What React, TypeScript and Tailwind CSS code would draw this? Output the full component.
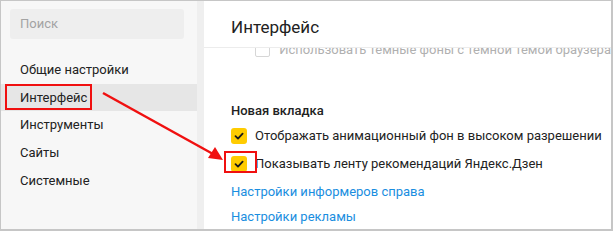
import React from "react";

const Check = () => (
  <svg width="16" height="16" viewBox="0 0 16 16" className="block">
    <path d="M4.5 8.2 L7 10.6 L11.6 5.6" fill="none" stroke="#1a1a1a" strokeWidth="1.8" strokeLinecap="round" strokeLinejoin="round" />
  </svg>
);

export default function App() {
  const font = { fontFamily: 'Roboto, "Noto Sans", sans-serif' };
  return (
    <div className="relative w-[613px] h-[231px] overflow-hidden bg-white whitespace-nowrap" style={font}>
      <div className="flex h-full border border-[#c6c6c6] border-r-2 border-b-2">
        {/* Sidebar */}
        <div className="w-[196px] shrink-0 h-full bg-[#f7f7f7] flex flex-col">
          <div className="ml-[9px] mr-[13px] mt-[8px] h-[30px] rounded-[3px] bg-[#eeeeee] flex items-center pl-[10px] text-[13px] text-[#a3a3a3]">
            Поиск
          </div>
          <div className="mt-[17px] flex flex-col text-[13px] text-[#222]">
            <div className="h-[28px] flex items-center pl-[19px]">Общие настройки</div>
            <div className="h-[27px] flex items-center pl-[19px] bg-[#e6e6e6]">Интерфейс</div>
            <div className="h-[28px] flex items-center pl-[19px]">Инструменты</div>
            <div className="h-[28px] flex items-center pl-[19px]">Сайты</div>
            <div className="h-[28px] flex items-center pl-[19px]">Системные</div>
          </div>
        </div>
        <div className="w-[7px] shrink-0 h-full bg-[#efefef]" />
        {/* Content */}
        <div className="flex-1 min-w-0 h-full flex flex-col bg-white">
          <div className="h-[47px] shrink-0 border-b border-[#ececec] flex items-center pt-[7px] pl-[27px] text-[17px] text-[#222]">
            Интерфейс
          </div>
          <div className="flex-1 overflow-hidden">
            <div className="-mt-[6px] pl-[27px]">
              <div className="h-[16px] flex items-center gap-[9px] pl-[24px]">
                <div className="w-[16px] h-[14px] rounded-[2px] border border-[#d6d6d6]" />
                <span className="text-[13px] text-[#b0b0b0]">Использовать темные фоны с темной темой браузера</span>
              </div>
              <div className="mt-[43px] text-[13px] font-medium text-[#222]">Новая вкладка</div>
              <div className="mt-[5px] flex items-center gap-[8px] h-[20px]">
                <div className="w-[16px] h-[16px] rounded-[3px] bg-[#ffcc00]"><Check /></div>
                <span className="text-[13px] text-[#222]">Отображать анимационный фон в высоком разрешении</span>
              </div>
              <div className="mt-[8px] flex items-center gap-[8px] h-[20px]">
                <div className="w-[16px] h-[16px] rounded-[3px] bg-[#ffcc00]"><Check /></div>
                <span className="text-[13px] text-[#222]">Показывать ленту рекомендаций Яндекс.Дзен</span>
              </div>
              <div className="mt-[10px] text-[13px] leading-[16px] text-[#1a8ee0]">Настройки информеров справа</div>
              <div className="mt-[9px] text-[13px] leading-[16px] text-[#1a8ee0]">Настройки рекламы</div>
            </div>
          </div>
        </div>
      </div>
      {/* Annotations */}
      <div className="absolute left-[5px] top-[84px] w-[87px] h-[26px] border-2 border-[#f01010]" />
      <div className="absolute left-[224px] top-[151px] w-[33px] h-[22px] border-2 border-[#f01010]" />
      <svg className="absolute left-0 top-0" width="613" height="231">
        <line x1="103" y1="93" x2="213" y2="154" stroke="#f01010" strokeWidth="2.5" />
        <polygon points="223,160 208,158 215,147" fill="#f01010" />
      </svg>
    </div>
  );
}
